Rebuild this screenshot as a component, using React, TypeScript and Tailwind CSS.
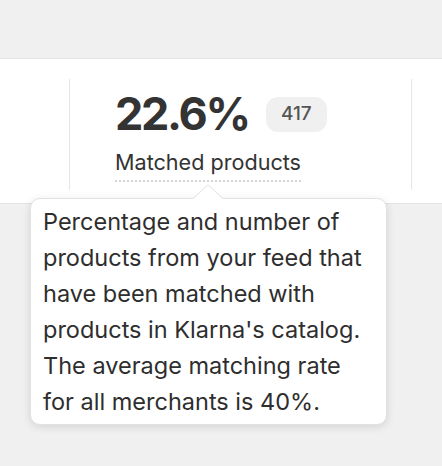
export default function App() {
  return (
    <div className="relative h-[466px] w-[442px] overflow-hidden bg-[#f0f0f0] font-['Inter',sans-serif] text-[#333]">
      <div className="h-[58px]" />
      <div className="flex border-y border-[#e2e2e2] bg-white pt-5 pb-[13px]">
        <div className="w-[70px] border-r border-[#e6e6e6]" />
        <div className="h-[111px] flex-1 border-r border-[#e6e6e6] pl-[45px] pt-[11px]">
          <div className="flex items-start gap-[17px]">
            <span className="text-[45px] font-bold leading-[48px] tracking-[-2.3px]">22.6%</span>
            <span className="mt-[7px] flex h-[35px] w-[61px] items-center justify-center rounded-[12px] bg-[#f0f0f0] text-[19px] font-medium text-[#555]">
              417
            </span>
          </div>
          <div className="mt-[11px] inline-block border-b-2 border-dotted border-[#d4d4d4] pb-[4px] text-[21.6px] leading-[27px]">
            Matched products
          </div>
        </div>
        <div className="w-[30px]" />
      </div>

      <div className="absolute left-[30px] top-[198px] w-[357px] rounded-[10px] border border-[#e2e2e2] bg-white px-[12px] pt-[5px] pb-[4px] text-[23.5px] leading-[36px] text-[#2e2e2e] shadow-[0_2px_8px_rgba(0,0,0,0.12)]">
        <svg className="absolute left-[161px] top-[-15px]" width="32" height="16" viewBox="0 0 32 16">
          <path d="M0 15.5 L16 0.8 L32 15.5" fill="white" stroke="#e2e2e2" strokeWidth="1" />
          <rect x="0" y="15" width="32" height="2" fill="white" />
        </svg>
        Percentage and number of
        <br />
        products from your feed that
        <br />
        have been matched with
        <br />
        products in Klarna's catalog.
        <br />
        The average matching rate
        <br />
        for all merchants is 40%.
      </div>
    </div>
  );
}
